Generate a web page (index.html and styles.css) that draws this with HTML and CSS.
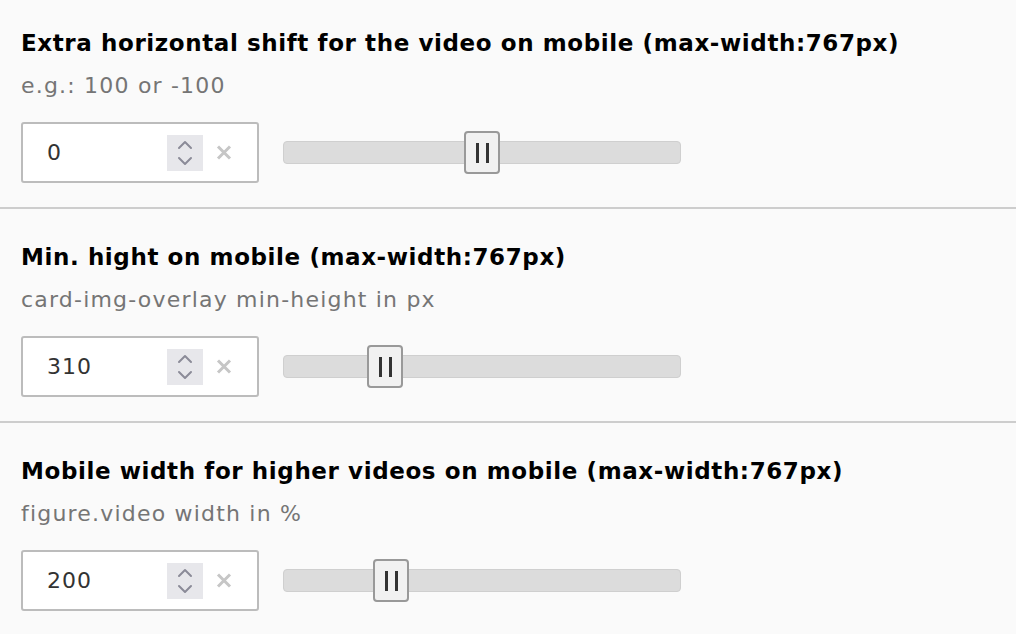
FILE: index.html
```html
<!DOCTYPE html>
<html lang="en">
<head>
    <meta charset="UTF-8">
    <title>Mobile video settings</title>
    <link rel="stylesheet" href="styles.css">
</head>
<body>
<div class="form-wrap">
    <div class="form-section">
        <h3 class="field-title">Extra horizontal shift for the video on mobile (max-width:767px)</h3>
        <div class="field-desc">e.g.: 100 or -100</div>
        <div class="field-row">
            <div class="num-input">
                <span class="num-value">0</span>
                <span class="spinner">
                    <svg width="16" height="26" viewBox="0 0 16 26"><path d="M2 8 L8 2 L14 8 M2 18 L8 24 L14 18" fill="none" stroke="#8b8b98" stroke-width="2" stroke-linecap="round" stroke-linejoin="round"/></svg>
                </span>
                <span class="clear">
                    <svg width="16" height="15" viewBox="0 0 16 15"><path d="M2 1.5 L14 13.5 M14 1.5 L2 13.5" stroke="#c6c6c6" stroke-width="3"/></svg>
                </span>
            </div>
            <div class="slider">
                <div class="slider-handle" style="left: 180px"><i></i><i></i></div>
            </div>
        </div>
    </div>
    <div class="form-section">
        <h3 class="field-title">Min. hight on mobile (max-width:767px)</h3>
        <div class="field-desc">card-img-overlay min-height in px</div>
        <div class="field-row">
            <div class="num-input">
                <span class="num-value">310</span>
                <span class="spinner">
                    <svg width="16" height="26" viewBox="0 0 16 26"><path d="M2 8 L8 2 L14 8 M2 18 L8 24 L14 18" fill="none" stroke="#8b8b98" stroke-width="2" stroke-linecap="round" stroke-linejoin="round"/></svg>
                </span>
                <span class="clear">
                    <svg width="16" height="15" viewBox="0 0 16 15"><path d="M2 1.5 L14 13.5 M14 1.5 L2 13.5" stroke="#c6c6c6" stroke-width="3"/></svg>
                </span>
            </div>
            <div class="slider">
                <div class="slider-handle" style="left: 83px"><i></i><i></i></div>
            </div>
        </div>
    </div>
    <div class="form-section">
        <h3 class="field-title">Mobile width for higher videos on mobile (max-width:767px)</h3>
        <div class="field-desc">figure.video width in %</div>
        <div class="field-row">
            <div class="num-input">
                <span class="num-value">200</span>
                <span class="spinner">
                    <svg width="16" height="26" viewBox="0 0 16 26"><path d="M2 8 L8 2 L14 8 M2 18 L8 24 L14 18" fill="none" stroke="#8b8b98" stroke-width="2" stroke-linecap="round" stroke-linejoin="round"/></svg>
                </span>
                <span class="clear">
                    <svg width="16" height="15" viewBox="0 0 16 15"><path d="M2 1.5 L14 13.5 M14 1.5 L2 13.5" stroke="#c6c6c6" stroke-width="3"/></svg>
                </span>
            </div>
            <div class="slider">
                <div class="slider-handle" style="left: 89px"><i></i><i></i></div>
            </div>
        </div>
    </div>
</div>
</body>
</html>
```

FILE: styles.css
```css
body { margin: 0; background: #fafafa; font-family: "DejaVu Sans", Verdana, sans-serif; color: #000; }
.form-section { padding: 33px 20px 24px 21px; border-bottom: 2px solid #cdcdcd; }
.form-section:first-child { padding-top: 28px; }
.field-title { margin: 0 0 13px; font-size: 23px; line-height: 30px; font-weight: bold; letter-spacing: 0.6px; }
.field-desc { margin: 0 0 21px; font-size: 22px; line-height: 30px; color: #757575; letter-spacing: 1.2px; }
.field-row { display: flex; align-items: center; gap: 24px; }
.num-input { box-sizing: border-box; width: 238px; height: 61px; display: flex; align-items: center; background: #fff; border: 2px solid #bcbcbc; border-radius: 3px; padding: 0 0 0 24px; }
.num-value { flex: 1; font-size: 22px; color: #333; letter-spacing: 1px; }
.spinner { width: 36px; height: 36px; display: flex; align-items: center; justify-content: center; background: #e7e7eb; }
.clear { width: 16px; margin: 0 25px 0 13px; display: flex; }
.slider { position: relative; box-sizing: border-box; width: 398px; height: 23px; background: #dcdcdc; border: 1px solid #cfcfcf; border-radius: 4px; }
.slider-handle { position: absolute; top: -11px; box-sizing: border-box; width: 36px; height: 43px; background: #f1f1f1; border: 2px solid #999; border-radius: 4px; display: flex; justify-content: center; align-items: center; gap: 7px; }
.slider-handle i { width: 3px; height: 20px; background: #333; }
```
